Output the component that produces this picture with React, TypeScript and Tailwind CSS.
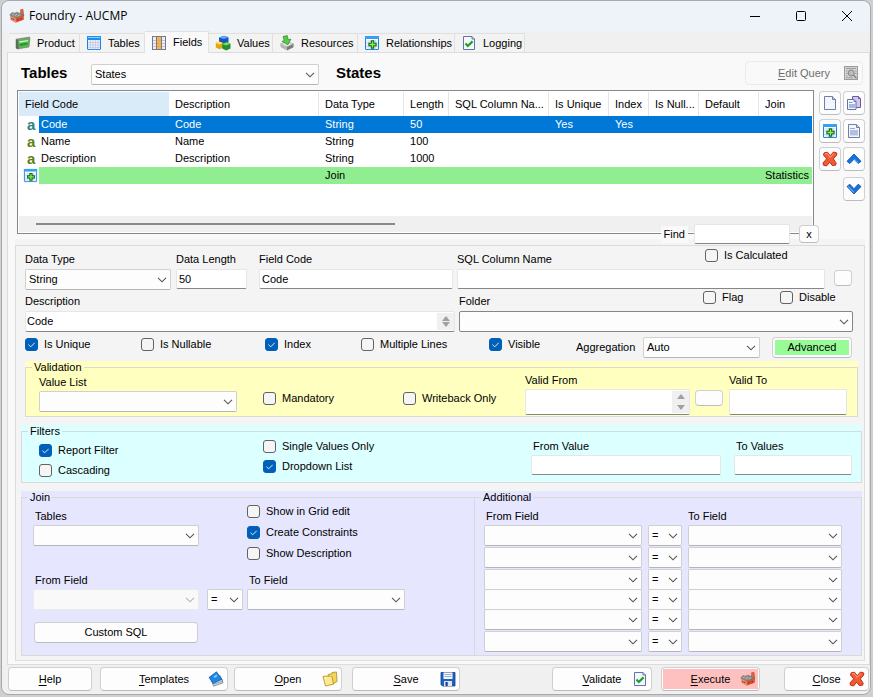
import { useId, useState, type ReactNode } from "react";
import clsx from "clsx";

type IconProps = { className?: string };

function FactoryIcon({ className = "h-4 w-4" }: IconProps) {
    return (
        <svg viewBox="0 0 16 16" className={className} aria-hidden="true">
            <path d="M11.500 1.800 14 1.200l.8 6.800-3 1z" fill="#e8603c" stroke="#a8452c" strokeWidth=".5" />
            <path d="M.8 7 6.500 9.500v5.300L1.600 12z" fill="#f5926c" />
            <path d="m6.500 9.500 8.300-2.500v4.800l-8.300 3z" fill="#e0552f" />
            <path d="M.8 7 3 4.600l3 .6 1.500-1 4 1.300 3.300 1.500-8.300 3z" fill="#8c8c8c" stroke="#6a6a6a" strokeWidth=".6" />
            <path d="m2.800 6.800 2-1M5.500 7.800 8 6.300M8.600 8.200l2.400-1.500" stroke="#c2c2c2" strokeWidth=".9" />
            <path d="m2.300 9.700 1.100.5v1.500l-1.100-.5zm2 .9 1.100.5v1.500l-1.100-.5zM8.300 11.200l1.400-.5v1.500l-1.400.5zm3-1 1.500-.5v1.500l-1.500.5z" fill="#7a3320" />
        </svg>
    );
}

function ProductIcon({ className = "h-4 w-4" }: IconProps) {
    return (
        <svg viewBox="0 0 16 16" className={className} aria-hidden="true">
            <path d="M1 4.200 14.500 2l.5 1-1 9-11.500 2L1 13z" fill="#8a938a" stroke="#5f6b5f" strokeWidth=".5" />
            <path d="m3.200 5.200 11-1.800-.8 7.800-9.400 1.600z" fill="#4fbf42" />
            <path d="m4.300 6.200 8.700-1.300-.1 1.300L4.500 7.700z" fill="#d2f5c9" />
            <path d="m4.800 9 7.800-1.200-.1 1.800L5 10.900z" fill="#239323" />
            <path d="m1 4.200 2 1 .8 8.300-1.300.5L1 13z" fill="#5c6b5c" />
        </svg>
    );
}

function GridIcon({ className = "h-4 w-4" }: IconProps) {
    return (
        <svg viewBox="0 0 16 16" className={className} aria-hidden="true">
            <rect x="1.500" y="1.500" width="13" height="13" rx=".5" fill="#eef1fb" stroke="#1485e8" />
            <rect x="1" y="1" width="14" height="4" rx=".5" fill="#1e90f0" />
            <path d="M2 2.500h12" stroke="#8cd0ff" />
            <path d="M2 7.500h12M2 10h12M2 12.500h12M4.500 5v9.500M7 5v9.500M9.500 5v9.500M12 5v9.500" stroke="#bcc6e4" strokeWidth=".8" />
        </svg>
    );
}

function ColumnsIcon({ className = "h-4 w-4" }: IconProps) {
    return (
        <svg viewBox="0 0 16 16" className={className} aria-hidden="true">
            <rect x="1.500" y="1.500" width="13" height="13" fill="#e9edf8" stroke="#77798c" />
            <rect x="6" y="2" width="4" height="12" fill="#fbb33c" />
            <path d="M2 5.500h12M2 8.500h12M2 11.500h12" stroke="#b3a895" strokeWidth=".6" />
            <path d="M5.500 1v14M10.500 1v14" stroke="#77798c" />
        </svg>
    );
}

function ValuesIcon({ className = "h-4 w-4" }: IconProps) {
    return (
        <svg viewBox="0 0 16 16" className={className} aria-hidden="true">
            <path d="m4 2.500 5-1.700 4.500 1.500v5.200L9 9.200 4 7.700z" fill="#1457bd" />
            <path d="M4 2.500 9 .8l4.500 1.500L9 3.900z" fill="#5fa8f5" />
            <path d="m.8 8 3.400-1.500L8 8v4.800L4.500 14.300.8 12.500z" fill="#e0a80c" />
            <path d="m.8 8 3.400-1.500L8 8 4.600 9.400z" fill="#ffe46a" />
            <path d="m7.200 9 4.300-1.800 4 1.500v4.700l-4.300 2-4-1.800z" fill="#24902a" />
            <path d="m7.200 9 4.300-1.800 4 1.500-4.300 1.700z" fill="#7fd968" />
        </svg>
    );
}

function ResourcesIcon({ className = "h-4 w-4" }: IconProps) {
    return (
        <svg viewBox="0 0 16 16" className={className} aria-hidden="true">
            <path d="m1.500 9 6-2.500 7 2.500L8 12z" fill="#e5e5e5" stroke="#8f8f8f" strokeWidth=".6" />
            <path d="M1.500 9 8 12v3.500L1.500 12z" fill="#b5b5b5" />
            <path d="M14.500 9 8 12v3.500l6.500-3.300z" fill="#7b7b7b" />
            <path d="M4 1.500 8.300.6l.9 4 2.800-.4-3.200 5.600L3 6.300l2.300-.6z" fill="#55cb49" stroke="#268a22" strokeWidth=".7" />
        </svg>
    );
}

function AddTableIcon({ className = "h-4 w-4" }: IconProps) {
    return (
        <svg viewBox="0 0 16 16" className={className} aria-hidden="true">
            <rect x="1.500" y="1.500" width="13" height="13" rx=".5" fill="#eef1fb" stroke="#1485e8" />
            <rect x="1" y="1" width="14" height="3" rx=".5" fill="#35a0f5" />
            <path d="M2 4.500h12" stroke="#fff" />
            <path d="M2 8h12M2 11.500h12M5 5v9.500M11.500 5v9.500" stroke="#c3cbe6" strokeWidth=".7" />
            <path d="M7.300 5.900h2.400v2.400h2.400v2.400H9.700v2.400H7.300v-2.400H4.900V8.300h2.400z" fill="#8df05a" stroke="#0a6e10" strokeWidth="1.100" />
        </svg>
    );
}

function CheckPageIcon({ className = "h-4 w-4" }: IconProps) {
    return (
        <svg viewBox="0 0 16 16" className={className} aria-hidden="true">
            <path d="M2.500 1.500h8.500l2.500 2.500v10.500h-11z" fill="#f5f8ff" stroke="#5f78a8" />
            <path d="M11 1.500V4h2.500" fill="#c8d6f0" stroke="#5f78a8" />
            <path d="m4.500 8.500 2.300 2.500 4.800-4.600" fill="none" stroke="#1fa01f" strokeWidth="2.200" />
        </svg>
    );
}

function PageIcon({ className = "h-4 w-4" }: IconProps) {
    return (
        <svg viewBox="0 0 16 16" className={className} aria-hidden="true">
            <path d="M2.500 1.500h8l3 3v10h-11z" fill="#f3f6fd" stroke="#6b7fa8" />
            <path d="M10.500 1.500v3h3" fill="#c3cfea" stroke="#6b7fa8" />
        </svg>
    );
}

function TextPageIcon({ className = "h-4 w-4" }: IconProps) {
    return (
        <svg viewBox="0 0 16 16" className={className} aria-hidden="true">
            <path d="M2.500 1.500h8l3 3v10h-11z" fill="#f3f6fd" stroke="#6b7fa8" />
            <path d="M10.500 1.500v3h3" fill="#c3cfea" stroke="#6b7fa8" />
            <path d="M4 5.500h5" stroke="#9aa7cc" />
            <rect x="4" y="7" width="8" height="5.500" fill="#b4bfde" />
        </svg>
    );
}

function CopyPagesIcon({ className = "h-4 w-4" }: IconProps) {
    return (
        <svg viewBox="0 0 16 16" className={className} aria-hidden="true">
            <path d="M6.500 1.500h6l2 2v9h-8z" fill="#d3c6ee" stroke="#6f5aa5" />
            <path d="M12.500 1.500v2h2" fill="#a893d6" stroke="#6f5aa5" />
            <path d="M1.500 4.500h6.500l2 2v8h-8.500z" fill="#f1f5ff" stroke="#5f78a8" />
            <path d="M8 4.500v2h2" fill="#c8d6f0" stroke="#5f78a8" />
            <path d="M3 7.500h3.500" stroke="#8496c4" />
            <rect x="3" y="9" width="6" height="4" fill="#aab8de" />
        </svg>
    );
}

function CrossIcon({ className = "h-4 w-4" }: IconProps) {
    return (
        <svg viewBox="0 0 16 16" className={className} aria-hidden="true">
            <path
                d="M2.200 1.800 5.500 1.200 8.200 4.700 11.500 1l3.300 1-.3 2.300L11.300 7.900l2.900 4.300-.6 2-3.300.3-2.600-3.300L4.500 15l-3-.8L1 12l3.700-4.200L1.500 4z"
                fill="#f25a33"
                stroke="#bd2f14"
                strokeWidth="1"
            />
            <path d="M3 2.900 5.200 2.300l3 4L12 2.400" fill="none" stroke="#ffa68a" strokeWidth="1" />
        </svg>
    );
}

function ArrowIcon({ down = false }: { down?: boolean }) {
    return (
        <svg viewBox="0 0 16 16" className="h-4 w-4" aria-hidden="true">
            {down ? (
                <>
                    <path d="m1 5.500 2.800-2.300L8 7.800l4.200-4.600L15 5.500 8 13z" fill="#1672e0" stroke="#0b4a9e" strokeWidth=".8" />
                    <path d="M2.200 5.400 8 11.300" stroke="#5fb0fb" strokeWidth="1.200" />
                </>
            ) : (
                <>
                    <path d="M8 3 15 10.300l-2.800 2.300L8 8.200l-4.200 4.400L1 10.300z" fill="#1672e0" stroke="#0b4a9e" strokeWidth=".8" />
                    <path d="M8 8 12.500 12" stroke="#5fb0fb" strokeWidth="1" />
                </>
            )}
        </svg>
    );
}

function BookIcon({ className = "h-4 w-4" }: IconProps) {
    return (
        <svg viewBox="0 0 16 16" className={className} aria-hidden="true">
            <path d="m1.500 6 3 7 10-2L15 9.500 12 4z" fill="#8e979f" />
            <path d="m3.500 9.500 2 5.700 9.500-3.400-1-3.300z" fill="#d8e0e7" stroke="#4e5a64" strokeWidth=".6" />
            <path d="m6 13.200 8.300-2.900" stroke="#7b8791" strokeWidth=".7" />
            <path d="M1 6.500 8.500.8l5.300 7.400-8.500 4.300z" fill="#1e86e8" stroke="#0b57a8" strokeWidth=".7" />
            <path d="m5.500 5.500 3-2 1 1.400-3 2z" fill="#8bcbff" />
        </svg>
    );
}

function FolderIcon({ className = "h-4 w-4" }: IconProps) {
    return (
        <svg viewBox="0 0 16 16" className={className} aria-hidden="true">
            <path d="M6 3.500 9.500 3l.5-1.500 4.500-.5.500 9.500-4 2.500H6z" fill="#f4d35a" stroke="#b08a1c" strokeWidth=".8" />
            <path d="M1 5.500 4.500 5l.8 1.200L10 5.800l1.500 7.400L3.500 15z" fill="#ffe98a" stroke="#b08a1c" strokeWidth=".8" />
            <path d="m2.500 7 6.700-.5" stroke="#fff8cf" />
        </svg>
    );
}

function SaveIcon({ className = "h-4 w-4" }: IconProps) {
    return (
        <svg viewBox="0 0 16 16" className={className} aria-hidden="true">
            <path d="M1 1.500h14v13.500H2.500L1 13.500z" fill="#1c62c4" stroke="#123f86" strokeWidth=".8" />
            <path d="M3.500 1.500h9V8h-9z" fill="#f2f5fa" />
            <path d="M4.500 3.500h7M4.500 5.500h7" stroke="#98a7c4" strokeWidth=".9" />
            <path d="M4 10h8v5H4z" fill="#dfe5ee" />
            <path d="M5.500 11h2.200v4H5.500z" fill="#123f86" />
        </svg>
    );
}

function QueryIcon({ className = "h-4 w-4" }: IconProps) {
    return (
        <svg viewBox="0 0 16 16" className={className} aria-hidden="true">
            <rect x="1.500" y="1.500" width="13" height="13" fill="#d2d2d2" stroke="#9d9d9d" />
            <path d="M3 3.500h10M3 6h1.500M3 8.500h1.500M3 11h1.500M12 6h1.500M12 8.500h1.500M3 12.800h7" stroke="#a0a0a0" />
            <circle cx="8.200" cy="8" r="3" fill="#bdbdbd" stroke="#858585" />
            <path d="m10.500 10.300 3 3" stroke="#858585" strokeWidth="1.600" />
        </svg>
    );
}

function LetterIcon({ selected = false }: { selected?: boolean }) {
    return (
        <span className={clsx("block pl-2 text-[15px] leading-[13px] font-bold", selected ? "text-[#2b8080]" : "text-[#5c8018]")}>
            a
        </span>
    );
}

type SelectBoxProps = {
    id?: string;
    label?: string;
    value?: string;
    className?: string;
    disabled?: boolean;
    dark?: boolean;
};

function SelectBox({ id, label, value = "", className, disabled, dark }: SelectBoxProps) {
    return (
        <div className={clsx("relative h-[21px]", className)}>
            <select
                id={id}
                aria-label={label}
                disabled={disabled}
                defaultValue={value}
                className={clsx(
                    "h-full w-full appearance-none rounded-xs border pl-[3px] text-black",
                    disabled ? "border-[#ebebeb] bg-[#f9f9f9]" : "bg-[#fdfdfd]",
                    dark && "border-[#868686]",
                    !dark && !disabled && "border-[#d0d0d0] border-b-[#b5b5b5]",
                )}
            >
                <option value={value}>{value}</option>
            </select>
            <svg viewBox="0 0 10 6" className="pointer-events-none absolute top-2 right-1 h-[6px] w-[10px]" aria-hidden="true">
                <path d="m1 .8 4 4 4-4" fill="none" stroke={disabled ? "#b5b5b5" : "#555"} strokeWidth="1.100" />
            </svg>
        </div>
    );
}

type TextBoxProps = { id?: string; label?: string; value?: string; className?: string };

function TextBox({ id, label, value, className = "h-5" }: TextBoxProps) {
    return (
        <input
            id={id}
            type="text"
            aria-label={label}
            defaultValue={value}
            className={clsx("block w-full rounded-xs border border-[#e6e6e6] border-b-[#868686] bg-white px-0.5 text-black", className)}
        />
    );
}

function ScrollTextBox({ id, value, className = "h-[21px]" }: TextBoxProps) {
    return (
        <div className={clsx("flex rounded-xs border border-[#e6e6e6] border-b-[#868686] bg-white", className)}>
            <textarea id={id} defaultValue={value} className="min-w-0 flex-1 resize-none overflow-hidden px-px leading-[18px] text-black" />
            <div className="my-px flex w-[17px] flex-col items-center justify-between bg-[#f0f0f0] py-[3px]" aria-hidden="true">
                <span className="border-x-4 border-b-5 border-x-transparent border-b-[#a0a0a0]" />
                <span className="border-x-4 border-t-5 border-x-transparent border-t-[#a0a0a0]" />
            </div>
        </div>
    );
}

type FieldProps = {
    label: string;
    className?: string;
    labelClassName?: string;
    extra?: ReactNode;
    children: (id: string) => ReactNode;
};

function Field({ label, className, labelClassName = "h-[17px] leading-4", extra, children }: FieldProps) {
    const id = useId();

    return (
        <div className={className}>
            <div className={clsx("flex items-start", labelClassName)}>
                <label htmlFor={id} className="flex-1 whitespace-nowrap">{label}</label>
                {extra}
            </div>
            {children(id)}
        </div>
    );
}

type CheckProps = { label: string; checked?: boolean; className?: string };

function Check({ label, checked = false, className }: CheckProps) {
    return (
        <label className={clsx("flex h-[13px] items-center gap-1.5 leading-[13px] whitespace-nowrap", className)}>
            <span className="relative h-[13px] w-[13px] shrink-0">
                <input
                    type="checkbox"
                    defaultChecked={checked}
                    className="peer block h-[13px] w-[13px] appearance-none rounded-[3px] border border-[#626262] bg-[#f5f5f5] checked:border-[#005fb8] checked:bg-[#005fb8]"
                />
                <svg viewBox="0 0 13 13" className="pointer-events-none absolute inset-0 hidden peer-checked:block" aria-hidden="true">
                    <path d="m3.500 6.700 2.200 2.100 4-4" fill="none" stroke="#e4f0fb" strokeWidth="1" />
                </svg>
            </span>
            {label}
        </label>
    );
}

type GroupProps = { title: string; className?: string; children: ReactNode };

function Group({ title, className, children }: GroupProps) {
    return (
        <fieldset className={clsx("min-w-0 border-[#d9d9d9]", className)}>
            <legend className="ml-1.5 px-0.5 leading-[13px]">{title}</legend>
            {children}
        </fieldset>
    );
}

function ToolButton({ label, children }: { label: string; children: ReactNode }) {
    return (
        <button
            type="button"
            aria-label={label}
            className="flex h-6 w-[22px] items-center justify-center rounded border border-[#d0d0d0] border-b-[#bcbcbc] bg-[#fdfdfd]"
        >
            {children}
        </button>
    );
}

function BlankButton({ label, className }: { label: string; className: string }) {
    return (
        <button type="button" aria-label={label} className={clsx("h-4 rounded border border-[#d0d0d0] border-b-[#bcbcbc] bg-[#fdfdfd]", className)} />
    );
}

type ActionButtonProps = { label: string; icon?: ReactNode; className: string; fill?: string; disabled?: boolean };

function ActionButton({ label, icon, className, fill, disabled }: ActionButtonProps) {
    return (
        <button
            type="button"
            disabled={disabled}
            className={clsx(
                "h-6 rounded border p-px",
                disabled ? "border-[#ebebeb] bg-[#f9f9f9] text-[#6d6d6d]" : "border-[#d0d0d0] border-b-[#bcbcbc] bg-[#fdfdfd]",
                className,
            )}
        >
            <span className={clsx("flex h-full items-center justify-between px-0.5", fill)}>
                <span className="w-4" />
                <span>
                    <span className="underline underline-offset-2">{label[0]}</span>
                    {label.slice(1)}
                </span>
                <span className="w-4">{icon}</span>
            </span>
        </button>
    );
}

const tabs = [
    { name: "Product", icon: ProductIcon, width: "w-[71px]" },
    { name: "Tables", icon: GridIcon, width: "w-[65px]" },
    { name: "Fields", icon: ColumnsIcon, width: "w-[64px]" },
    { name: "Values", icon: ValuesIcon, width: "w-[64px]" },
    { name: "Resources", icon: ResourcesIcon, width: "w-[85px]" },
    { name: "Relationships", icon: AddTableIcon, width: "w-[97px]" },
    { name: "Logging", icon: CheckPageIcon, width: "w-[70px]" },
];

const columns = [
    { name: "Description", width: "w-[150px]" },
    { name: "Data Type", width: "w-[85px]" },
    { name: "Length", width: "w-[45px]" },
    { name: "SQL Column Na...", width: "w-[100px]" },
    { name: "Is Unique", width: "w-[60px]" },
    { name: "Index", width: "w-[40px]" },
    { name: "Is Null...", width: "w-[50px]" },
    { name: "Default", width: "w-[60px]" },
    { name: "Join", width: "" },
];

const fields = [
    { kind: "selected", cells: ["Code", "Code", "String", "50", "", "Yes", "Yes", "", "", ""] },
    { kind: "plain", cells: ["Name", "Name", "String", "100", "", "", "", "", "", ""] },
    { kind: "plain", cells: ["Description", "Description", "String", "1000", "", "", "", "", "", ""] },
    { kind: "join", cells: ["", "", "Join", "", "", "", "", "", "", "Statistics"] },
];

const joinRows = ["h-[22px]", "h-[22px]", "h-5", "h-5", "h-[22px]", "h-[21px]"];

function FieldTable() {
    return (
        <table className="w-full table-fixed border-separate border-spacing-0 text-left whitespace-nowrap">
            <colgroup>
                <col className="w-5" />
                <col className="w-[130px]" />
                {columns.map((column) => (
                    <col key={column.name} className={column.width} />
                ))}
            </colgroup>
            <thead>
                <tr className="h-6">
                    <th colSpan={2} className="bg-[#d9ebf9] pl-1.5 font-normal">Field Code</th>
                    {columns.map((column) => (
                        <th key={column.name} className="border-r border-[#e5e5e5] pl-1.5 font-normal last:border-r-0">
                            {column.name}
                        </th>
                    ))}
                </tr>
            </thead>
            <tbody>
                {fields.map((field, index) => (
                    <tr key={index} className="h-[17px] leading-[17px]">
                        <td>
                            {field.kind === "join" ? (
                                <AddTableIcon className="ml-1 h-[15px] w-[15px]" />
                            ) : (
                                <LetterIcon selected={field.kind === "selected"} />
                            )}
                        </td>
                        {field.cells.map((cell, cellIndex) => (
                            <td
                                key={cellIndex}
                                className={clsx(
                                    cellIndex === 0 ? "pl-0.5" : "pl-1.5",
                                    field.kind === "selected" && "bg-[#0078d7] text-white",
                                    field.kind === "join" && "bg-[#90ee90]",
                                )}
                            >
                                {cell}
                            </td>
                        ))}
                    </tr>
                ))}
            </tbody>
        </table>
    );
}

export default function App() {
    const [activeTab, setActiveTab] = useState("Fields");

    return (
        <div className="flex min-h-screen flex-col bg-[#cfcfd2] pr-0.5 pl-px font-['Liberation_Sans',Arial,sans-serif] text-[11px] text-black">
            <div className="rounded-lg border border-[#a9a9ad] bg-[#f0f0f0] pb-[3px]">
                <header className="flex h-[30px] items-center rounded-t-lg bg-[#eef3f9] pl-[7px]">
                    <FactoryIcon />
                    <h1 className="ml-1 flex-1 font-['Open_Sans',sans-serif] text-[12px]">Foundry - AUCMP</h1>
                    <button type="button" aria-label="Minimize" className="flex h-full w-[46px] items-center justify-center">
                        <svg viewBox="0 0 12 12" className="h-3 w-3" aria-hidden="true">
                            <path d="M1 6.500h10" stroke="#000" />
                        </svg>
                    </button>
                    <button type="button" aria-label="Maximize" className="flex h-full w-[46px] items-center justify-center">
                        <svg viewBox="0 0 12 12" className="h-3 w-3" aria-hidden="true">
                            <rect x="1.500" y="1.500" width="9" height="9" rx="1" fill="none" stroke="#000" />
                        </svg>
                    </button>
                    <button type="button" aria-label="Close window" className="flex h-full w-[46px] items-center justify-center">
                        <svg viewBox="0 0 12 12" className="h-3 w-3" aria-hidden="true">
                            <path d="m1 1 10 10M11 1 1 11" stroke="#000" />
                        </svg>
                    </button>
                </header>

                <div className="flex h-[21px] items-end pl-[7px]" role="tablist">
                    {tabs.map((tab) => {
                        const active = tab.name === activeTab;
                        return (
                            <button
                                key={tab.name}
                                type="button"
                                role="tab"
                                aria-selected={active}
                                onClick={() => setActiveTab(tab.name)}
                                className={clsx(
                                    "flex items-center gap-1.5 border-t border-r border-[#e0e0e0] pl-1.5 whitespace-nowrap",
                                    tab.width,
                                    active ? "relative -mb-px h-[22px] bg-[#f9f9f9]" : "h-[19px] bg-[#f3f3f3]",
                                )}
                            >
                                <tab.icon className="h-4 w-4 shrink-0" />
                                {tab.name}
                            </button>
                        );
                    })}
                </div>

                <main className="ml-[5px] border border-[#dcdcdc] bg-[#f9f9f9] pt-2 pb-[3px]">
                    <div className="flex items-end pr-1.5 pl-[13px]">
                        <h2 className="w-[70px] text-[15px] leading-6 font-bold">Tables</h2>
                        <SelectBox label="Tables" value="States" className="w-[228px]" />
                        <h2 className="ml-[17px] flex-1 text-[15px] leading-6 font-bold">States</h2>
                        <ActionButton label="Edit Query" icon={<QueryIcon />} className="w-[118px]" disabled />
                    </div>

                    <div className="mt-[5px] flex gap-[5px] pr-1 pl-[9px]">
                        <div className="relative h-36 min-w-0 flex-1 border border-[#828790] bg-white p-px">
                            <div className="flex h-full flex-col justify-between">
                                <FieldTable />
                                <div className="h-4 bg-[#f0f0f0] pt-[7px] pl-[17px]">
                                    <div className="h-0.5 w-[359px] bg-[#868a86]" />
                                </div>
                            </div>
                            <div className="absolute -right-1.5 -bottom-[11px] flex items-center">
                                <label htmlFor="find" className="mr-1.5 bg-[#f9f9f9] px-[3px] leading-[17px]">Find</label>
                                <input id="find" type="text" className="h-5 w-24 rounded-xs border border-[#e6e6e6] border-b-[#868686] bg-white px-0.5" />
                                <button
                                    type="button"
                                    className="ml-[9px] h-[18px] w-5 rounded border border-[#d0d0d0] border-b-[#bcbcbc] bg-[#fdfdfd] leading-4"
                                >
                                    x
                                </button>
                            </div>
                        </div>
                        <div className="grid grid-cols-2 content-start gap-x-0.5 gap-y-1 pt-px">
                            <ToolButton label="New field"><PageIcon /></ToolButton>
                            <ToolButton label="Copy field"><CopyPagesIcon /></ToolButton>
                            <ToolButton label="Add join"><AddTableIcon /></ToolButton>
                            <ToolButton label="Field notes"><TextPageIcon /></ToolButton>
                            <ToolButton label="Delete field"><CrossIcon /></ToolButton>
                            <ToolButton label="Move up"><ArrowIcon /></ToolButton>
                            <div className="col-start-2 mt-0.5">
                                <ToolButton label="Move down"><ArrowIcon down /></ToolButton>
                            </div>
                        </div>
                    </div>

                    <div className="mt-[5px] mr-1 ml-[7px] bg-[#f4f4f4] pt-1.5">
                        <div className="border border-[#dcdcdc] pt-[3px] pb-1">
                            <div className="flex pr-3 pl-[9px]">
                                <Field label="Data Type" className="w-[146px]" labelClassName="h-5 leading-5">
                                    {(id) => <SelectBox id={id} value="String" />}
                                </Field>
                                <Field label="Data Length" className="ml-[5px] w-[71px]" labelClassName="h-5 leading-5">
                                    {(id) => <TextBox id={id} value="50" />}
                                </Field>
                                <Field label="Field Code" className="ml-3 w-[194px]" labelClassName="h-5 leading-5">
                                    {(id) => <TextBox id={id} value="Code" />}
                                </Field>
                                <Field
                                    label="SQL Column Name"
                                    className="ml-1 flex-1"
                                    labelClassName="h-5 leading-5"
                                    extra={<Check label="Is Calculated" className="w-[120px]" />}
                                >
                                    {(id) => <TextBox id={id} />}
                                </Field>
                                <BlankButton label="Edit SQL column" className="mt-[21px] ml-[9px] w-[18px]" />
                            </div>

                            <div className="mt-px grid grid-cols-[430fr_394fr] gap-1 pr-[11px] pl-[9px]">
                                <Field label="Description" labelClassName="h-5 leading-5">
                                    {(id) => <ScrollTextBox id={id} value="Code" />}
                                </Field>
                                <Field
                                    label="Folder"
                                    labelClassName="h-5 leading-5"
                                    extra={
                                        <>
                                            <Check label="Flag" className="w-[77px]" />
                                            <Check label="Disable" className="w-[73px]" />
                                        </>
                                    }
                                >
                                    {(id) => <SelectBox id={id} dark />}
                                </Field>
                            </div>

                            <div className="mt-[5px] flex items-start pl-[9px]">
                                <div className="flex pt-px">
                                    <Check label="Is Unique" checked className="w-[116px]" />
                                    <Check label="Is Nullable" className="w-[124px]" />
                                    <Check label="Index" checked className="w-[96px]" />
                                    <Check label="Multiple Lines" className="w-[128px]" />
                                    <Check label="Visible" checked className="w-[87px]" />
                                </div>
                                <label htmlFor="aggregation" className="w-[67px] leading-[21px]">Aggregation</label>
                                <SelectBox id="aggregation" value="Auto" className="w-[117px]" />
                                <button type="button" className="ml-3 h-[21px] w-20 rounded border border-[#d0d0d0] border-b-[#bcbcbc] bg-[#fdfdfd] p-0.5">
                                    <span className="block bg-[#98fb98] leading-[15px]">Advanced</span>
                                </button>
                            </div>

                            <div className="mt-[3px] mr-1.5 ml-[9px] bg-[#ffffc0]">
                                <Group title="Validation" className="border pb-px">
                                    <div className="flex items-start pr-[10px] pl-[13px]">
                                        <Field label="Value List" className="w-[198px]">
                                            {(id) => <SelectBox id={id} />}
                                        </Field>
                                        <Check label="Mandatory" className="mt-[18px] ml-[26px] w-[140px]" />
                                        <Check label="Writeback Only" className="mt-[18px] w-[122px]" />
                                        <Field label="Valid From" className="flex-1" labelClassName="h-[15px] leading-[13px]">
                                            {(id) => <ScrollTextBox id={id} className="h-[26px]" />}
                                        </Field>
                                        <BlankButton label="Pick date" className="mt-4 ml-[5px] w-7" />
                                        <Field label="Valid To" className="ml-1.5 w-[118px]" labelClassName="h-[15px] leading-[13px]">
                                            {(id) => <TextBox id={id} className="h-[26px]" />}
                                        </Field>
                                    </div>
                                </Group>
                            </div>

                            <div className="mt-2 mr-0.5 ml-[5px] bg-[#dcffff]">
                                <Group title="Filters" className="border pb-[5px]">
                                    <div className="flex items-start pr-[9px] pl-[17px]">
                                        <div className="flex w-56 flex-col gap-[7px] pt-1.5">
                                            <Check label="Report Filter" checked />
                                            <Check label="Cascading" />
                                        </div>
                                        <div className="flex w-[268px] flex-col gap-[7px] pt-0.5">
                                            <Check label="Single Values Only" />
                                            <Check label="Dropdown List" checked />
                                        </div>
                                        <Field label="From Value" className="flex-1" labelClassName="h-[17px] pl-0.5 leading-4">
                                            {(id) => <TextBox id={id} />}
                                        </Field>
                                        <Field label="To Values" className="ml-[13px] w-[118px]" labelClassName="h-[17px] pl-0.5 leading-4">
                                            {(id) => <TextBox id={id} />}
                                        </Field>
                                    </div>
                                </Group>
                            </div>

                            <div className="mt-2 mr-0.5 ml-[5px] flex bg-[#e6e6ff]">
                                <Group title="Join" className="w-[453px] border-y border-l pb-3">
                                    <div className="flex pl-[11px]">
                                        <Field label="Tables" className="w-[166px] pt-1" labelClassName="h-[17px] pl-0.5 leading-4">
                                            {(id) => <SelectBox id={id} />}
                                        </Field>
                                        <div className="ml-12 flex flex-col gap-2 pt-px">
                                            <Check label="Show in Grid edit" />
                                            <Check label="Create Constraints" checked />
                                            <Check label="Show Description" />
                                        </div>
                                    </div>
                                    <div className="mt-3 flex items-end pl-[11px]">
                                        <Field label="From Field" className="w-[166px]" labelClassName="h-[17px] pl-0.5 leading-4">
                                            {(id) => <SelectBox id={id} disabled />}
                                        </Field>
                                        <SelectBox label="Join operator" value="=" className="ml-2 w-9" />
                                        <Field label="To Field" className="ml-1 w-[158px]" labelClassName="h-[17px] pl-0.5 leading-4">
                                            {(id) => <SelectBox id={id} />}
                                        </Field>
                                    </div>
                                    <button
                                        type="button"
                                        className="mt-3 ml-3 block h-[21px] w-[164px] rounded border border-[#d0d0d0] border-b-[#bcbcbc] bg-[#fdfdfd]"
                                    >
                                        Custom SQL
                                    </button>
                                </Group>
                                <Group title="Additional" className="flex-1 border">
                                    <div className="flex gap-1.5 pt-1 pr-[19px] pl-[9px] leading-4">
                                        <span className="h-[17px] flex-1 pl-0.5">From Field</span>
                                        <span className="h-[17px] w-[154px]">To Field</span>
                                    </div>
                                    {joinRows.map((height, index) => (
                                        <div key={index} className={clsx("flex gap-1.5 pr-[19px] pl-[9px]", height)}>
                                            <SelectBox label={`From field ${index + 1}`} className="flex-1" />
                                            <SelectBox label={`Operator ${index + 1}`} value="=" className="w-[34px]" />
                                            <SelectBox label={`To field ${index + 1}`} className="w-[154px]" />
                                        </div>
                                    ))}
                                </Group>
                            </div>
                        </div>
                    </div>
                </main>

                <footer className="flex pt-0.5 pr-px pl-1.5">
                    <ActionButton label="Help" className="w-[84px]" />
                    <ActionButton label="Templates" icon={<BookIcon />} className="ml-2 w-32" />
                    <ActionButton label="Open" icon={<FolderIcon />} className="ml-1.5 w-[108px]" />
                    <ActionButton label="Save" icon={<SaveIcon />} className="ml-[10px] w-[108px]" />
                    <ActionButton label="Validate" icon={<CheckPageIcon />} className="ml-auto w-[100px]" />
                    <ActionButton label="Execute" icon={<FactoryIcon />} className="ml-[9px] w-[99px]" fill="bg-[#ffc0c0]" />
                    <ActionButton label="Close" icon={<CrossIcon />} className="ml-6 w-[85px]" />
                </footer>
            </div>
        </div>
    );
}
